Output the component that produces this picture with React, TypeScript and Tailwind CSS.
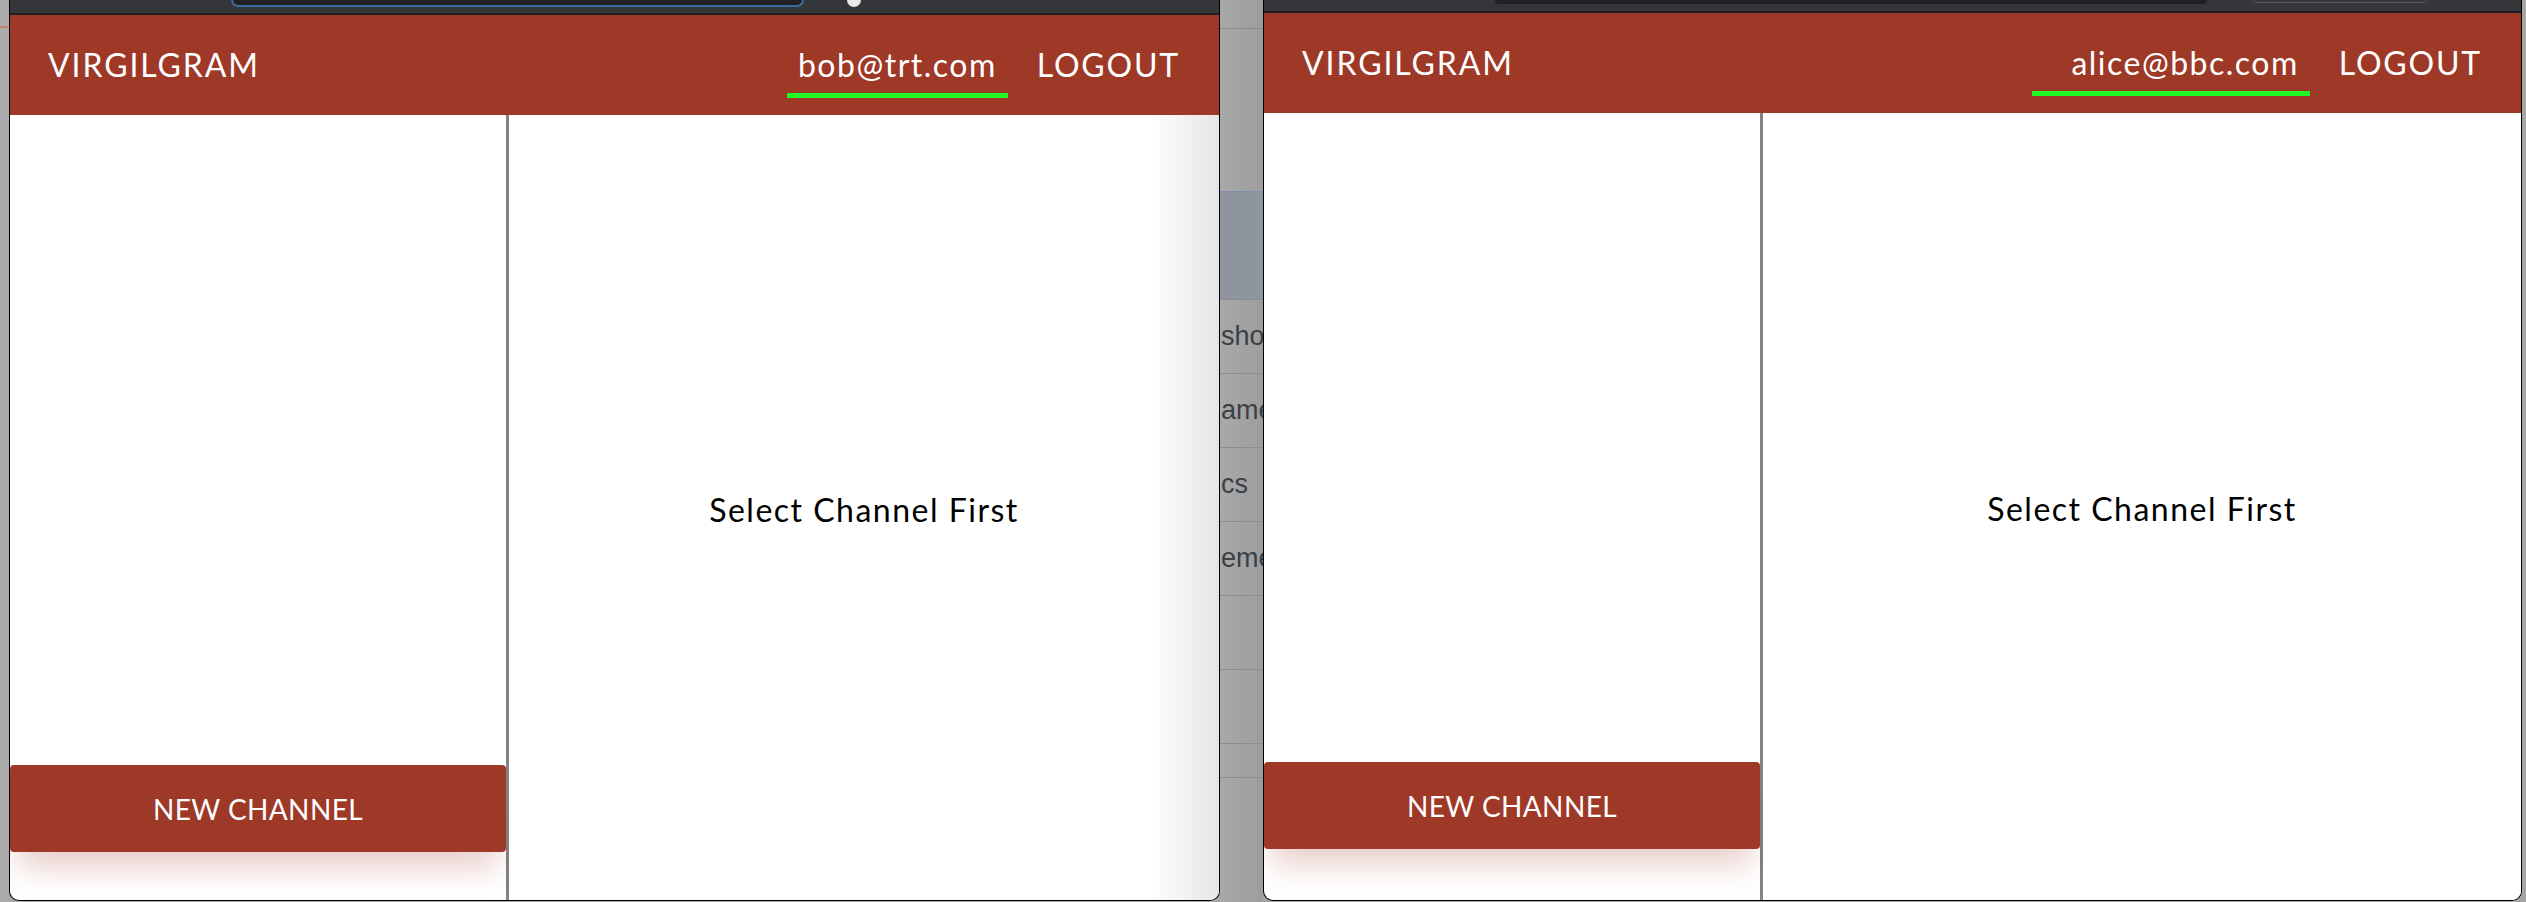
import { ReactNode } from "react";

type WindowProps = {
  email: string;
  emailClass: string;
  chrome: ReactNode;
  sidebarClass: string;
  outerClass: string;
  paneClass: string;
};

const AppWindow = ({ email, emailClass, chrome, sidebarClass, outerClass, paneClass }: WindowProps) => {
  return (
    <div
      className={`flex h-[901px] shrink-0 flex-col overflow-hidden rounded-b-[10px] border-x border-b border-black bg-white ${outerClass}`}
    >
      {chrome}
      <header className="flex h-[100px] shrink-0 items-center justify-between bg-[#9e3827] pl-[38px] pr-[39px] text-white">
        <span className="text-[32px] tracking-[1.9px]">VIRGILGRAM</span>
        <nav className="flex items-center gap-[29px]">
          <span
            className={`border-b-[5px] border-[#1ff826] pb-[8px] pr-[11px] pt-[13px] text-[32px] leading-[40px] tracking-[1.5px] ${emailClass}`}
          >
            {email}
          </span>
          <span className="text-[32px] tracking-[1.8px]">LOGOUT</span>
        </nav>
      </header>
      <div className="flex flex-1">
        <aside
          className={`flex shrink-0 flex-col justify-end border-r-[3px] border-[#838383] ${sidebarClass}`}
        >
          <button className="h-[87px] w-full rounded-[4px] bg-[#9e3827] text-[28px] tracking-[0.4px] text-white shadow-[0_24px_30px_-8px_rgba(158,56,39,0.24)]">
            NEW CHANNEL
          </button>
        </aside>
        <main className={`flex flex-1 items-center justify-center pt-[5px] ${paneClass}`}>
          <p className="text-[32px] tracking-[1.5px] text-black">Select Channel First</p>
        </main>
      </div>
    </div>
  );
};

const rows = ["shot", "ame", "cs", "eme", "", ""];

const BackgroundStrip = () => {
  return (
    <div className="flex h-full w-[43px] shrink-0 flex-col bg-[linear-gradient(to_right,#a9a9a9,#9d9d9d)]">
      <div className="h-[29px] border-b border-[#8c8c8c]" />
      <div className="h-[162px]" />
      <div className="h-[108px] border-t border-[#7f90a8] bg-[#8f959d]" />
      {rows.map((text, i) => (
        <div
          key={i}
          className="flex h-[74px] items-center overflow-hidden whitespace-nowrap border-t border-[#8d8d8d] pl-[1px] font-['Liberation_Sans',sans-serif] text-[27px] text-[#3b4046]"
        >
          {text}
        </div>
      ))}
      <div className="h-[34px] border-t border-[#8d8d8d]" />
      <div className="flex-1 border-t border-[#8d8d8d]" />
    </div>
  );
};

const LeftChrome = () => (
  <div className="flex h-[15px] shrink-0 items-start border-b-2 border-[#1f2023] bg-[#35363a]">
    <div className="ml-[221px] h-[7px] w-[573px] rounded-b-[9px] border-x-2 border-b-2 border-[#3a6c9c] bg-[#202124]" />
    <div className="ml-[43px] -mt-[7px] h-[14px] w-[14px] rounded-full bg-[#e8e8e8]" />
  </div>
);

const RightChrome = () => (
  <div className="flex h-[13px] shrink-0 items-start border-b-2 border-[#1f2023] bg-[#35363a]">
    <div className="ml-[231px] h-[4px] w-[712px] rounded-b-[8px] bg-[#202124]" />
    <div className="ml-[46px] h-[3px] w-[174px] rounded-b-[6px] border-x border-b border-[#55575c]" />
  </div>
);

export default function App() {
  return (
    <div className="flex h-[902px] w-[2526px] overflow-hidden bg-[#a5a5a5] font-['Lato',sans-serif]">
      <div className="flex w-[9px] shrink-0 flex-col bg-[#ababab]">
        <div className="h-[26px]" />
        <div className="h-[2px] bg-[#c4826f]" />
      </div>
      <AppWindow
        email="bob@trt.com"
        emailClass="pl-[11px]"
        chrome={<LeftChrome />}
        sidebarClass="w-[499px] pb-[48px]"
        outerClass="w-[1211px]"
        paneClass="bg-[linear-gradient(to_right,#ffffff_calc(100%-70px),#e6e6e6)]"
      />
      <BackgroundStrip />
      <AppWindow
        email="alice@bbc.com"
        emailClass="pl-[39px]"
        chrome={<RightChrome />}
        sidebarClass="w-[499px] pb-[51px]"
        outerClass="w-[1259px]"
        paneClass="bg-white"
      />
      <div className="w-[4px] shrink-0 bg-[#a5a5a5]" />
    </div>
  );
}
